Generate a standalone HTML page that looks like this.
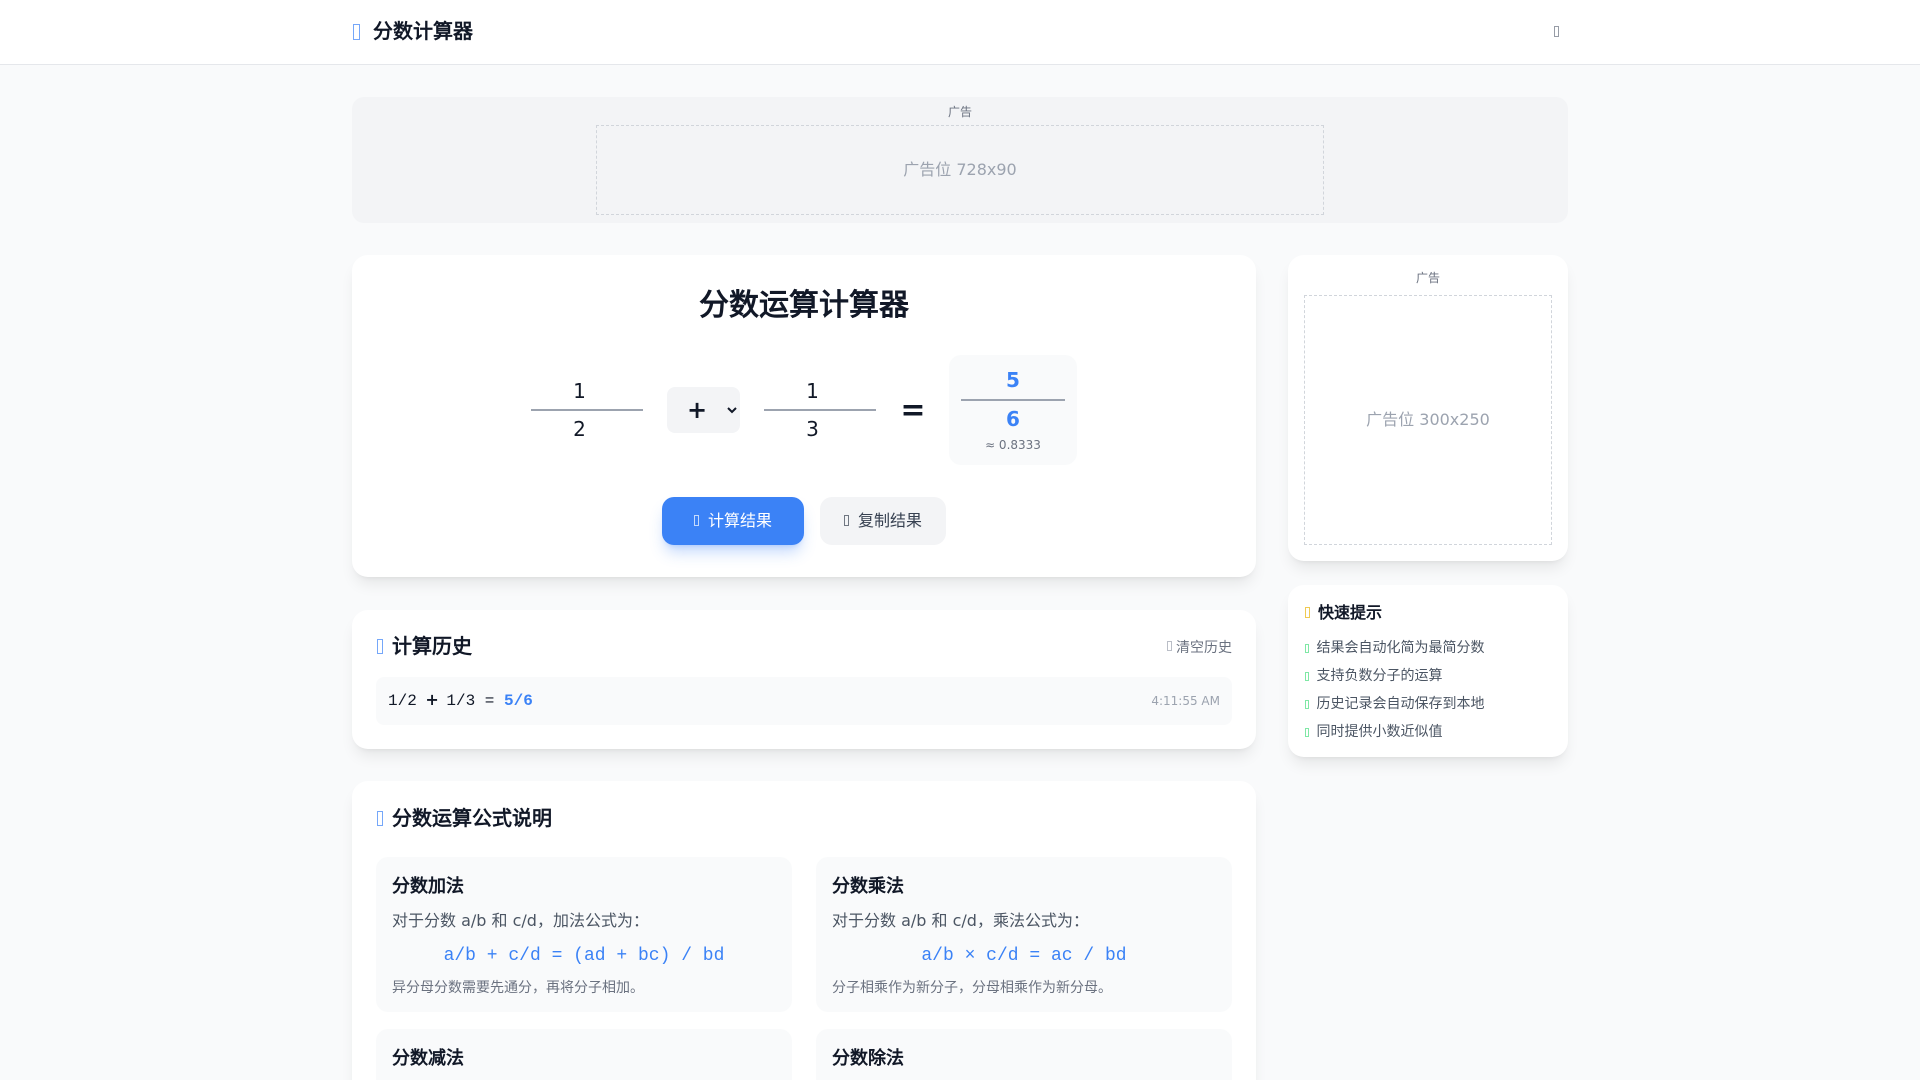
<!DOCTYPE html>
<html lang="zh-CN"><head><meta charset="utf-8"><title>分数计算器</title>
<style>
*{box-sizing:border-box;margin:0;padding:0}
html,body{width:1920px;height:1080px;overflow:hidden}
body{background:#f9fafb;color:#111827;font-family:"DejaVu Sans",sans-serif;font-size:16px;line-height:24px;position:relative}
.abs{position:absolute}
.tf{position:absolute;border:1px solid currentColor;opacity:.7}
.card{position:absolute;background:#fff;border-radius:16px;box-shadow:0 10px 15px -3px rgba(0,0,0,.08),0 4px 6px -4px rgba(0,0,0,.08)}
.hd{position:absolute;left:0;top:0;width:1920px;height:65px;background:#fff;border-bottom:1px solid #e5e7eb}
.ad-l{position:absolute;font-size:12px;line-height:16px;color:#6b7280;text-align:center}
.ad-b{position:absolute;border:1px dashed #d1d5db;display:flex;align-items:center;justify-content:center;color:#9ca3af;font-size:16px}
input{position:absolute;width:112px;height:38px;border:0;background:transparent;font:20px/28px "DejaVu Sans",sans-serif;color:#111827;text-align:center;outline:0}
.ln{position:absolute;height:2px;background:#9ca3af}
select{position:absolute;left:667px;top:387px;width:73px;height:46px;border:0;border-radius:8px;background:#f3f4f6;font:bold 24px "DejaVu Sans",sans-serif;color:#111827;padding-left:16px;outline:0}
.btn{position:absolute;top:497px;height:48px;border-radius:12px}
.btn span{position:absolute;top:12px;white-space:nowrap}
h3{position:absolute;font-size:20px;line-height:28px;font-weight:700;color:#111827}
.f{position:absolute;width:416px;height:155px;background:#f9fafb;border-radius:12px}
.f h4{position:absolute;left:16px;top:16px;font-size:18px;line-height:28px;font-weight:700}
.f p{position:absolute;left:16px;top:52px;color:#4b5563;font-size:16px;line-height:24px;white-space:nowrap}
.f code{position:absolute;left:0;width:416px;top:85px;text-align:center;font:18px/28px "Liberation Mono",monospace;color:#3b82f6}
.f small{position:absolute;left:16px;top:121px;font-size:14px;line-height:20px;color:#6b7280;white-space:nowrap}
.tip{position:absolute;left:1316.5px;font-size:14px;line-height:20px;color:#4b5563;white-space:nowrap}
.g{color:#4ade80}
</style></head><body>
<div class="hd"></div>
<div class="tf" style="left:353px;top:24px;width:7px;height:16px;color:#3b82f6"></div>
<div class="abs" style="left:373px;top:17px;font-size:20px;line-height:28px;font-weight:700">分数计算器</div>
<div class="tf" style="left:1554px;top:26px;width:5px;height:11px;color:#6b7280"></div>

<div class="abs" style="left:352px;top:97px;width:1216px;height:126px;background:#f3f4f6;border-radius:12px"></div>
<div class="ad-l" style="left:352px;width:1216px;top:104px">广告</div>
<div class="ad-b" style="left:596px;top:125px;width:728px;height:90px">广告位 728x90</div>

<div class="card" style="left:352px;top:255px;width:904px;height:322px"></div>
<div class="abs" style="left:352px;width:904px;top:286px;text-align:center;font-size:30px;line-height:40px;font-weight:700">分数运算计算器</div>
<input type="number" value="1" style="left:531px;top:372px">
<div class="ln" style="left:531px;top:409px;width:112px"></div>
<input type="number" value="2" style="left:531px;top:410px">
<select><option>+</option></select>
<input type="number" value="1" style="left:764px;top:372px">
<div class="ln" style="left:764px;top:409px;width:112px"></div>
<input type="number" value="3" style="left:764px;top:410px">
<div class="abs" style="left:893px;width:40px;top:391px;text-align:center;font-size:30px;line-height:40px;font-weight:700">=</div>
<div class="abs" style="left:949px;top:355px;width:128px;height:110px;background:#f9fafb;border-radius:12px"></div>
<div class="abs" style="left:949px;width:128px;top:366px;text-align:center;font-size:20px;line-height:28px;font-weight:700;color:#3b82f6">5</div>
<div class="ln" style="left:961px;top:399px;width:104px"></div>
<div class="abs" style="left:949px;width:128px;top:405px;text-align:center;font-size:20px;line-height:28px;font-weight:700;color:#3b82f6">6</div>
<div class="abs" style="left:949px;width:128px;top:437px;text-align:center;font-size:12px;line-height:16px;color:#6b7280">≈ 0.8333</div>
<div class="btn" style="left:662px;width:142px;background:#3b82f6;color:#fff;box-shadow:0 10px 15px -3px rgba(59,130,246,.3),0 4px 6px -4px rgba(59,130,246,.3)"><div class="tf" style="left:32px;top:18px;width:5px;height:11px"></div><span style="left:46px">计算结果</span></div>
<div class="btn" style="left:820px;width:126px;background:#f3f4f6;color:#374151"><div class="tf" style="left:24px;top:18px;width:5px;height:11px"></div><span style="left:38px">复制结果</span></div>

<div class="card" style="left:352px;top:610px;width:904px;height:139px"></div>
<div class="tf" style="left:377px;top:639px;width:6px;height:15px;color:#3b82f6"></div>
<h3 style="left:392px;top:632px">计算历史</h3>
<div class="tf" style="left:1167px;top:641px;width:5px;height:10px;color:#9ca3af"></div>
<div class="abs" style="right:688px;top:638px;font-size:14px;line-height:20px;color:#6b7280">清空历史</div>
<div class="abs" style="left:376px;top:677px;width:856px;height:48px;background:#f9fafb;border-radius:8px"></div>
<div class="abs" style="left:388px;top:689px;font:16px/24px 'Liberation Mono',monospace;white-space:pre">1/2 <b style="display:inline-block;width:10.4px;height:16px;line-height:16px;font-family:'DejaVu Sans',sans-serif;text-indent:-1px">+</b> 1/3 = <b style="color:#3b82f6">5/6</b></div>
<div class="abs" style="left:1120px;width:100px;text-align:right;top:693px;font-size:12px;line-height:16px;color:#9ca3af;white-space:nowrap">4:11:55 AM</div>

<div class="card" style="left:352px;top:781px;width:904px;height:400px"></div>
<div class="tf" style="left:377px;top:811px;width:6px;height:15px;color:#3b82f6"></div>
<h3 style="left:392px;top:804px">分数运算公式说明</h3>
<div class="f" style="left:376px;top:857px"><h4>分数加法</h4><p>对于分数 a/b 和 c/d，加法公式为：</p><code>a/b + c/d = (ad + bc) / bd</code><small>异分母分数需要先通分，再将分子相加。</small></div>
<div class="f" style="left:816px;top:857px"><h4>分数乘法</h4><p>对于分数 a/b 和 c/d，乘法公式为：</p><code>a/b × c/d = ac / bd</code><small>分子相乘作为新分子，分母相乘作为新分母。</small></div>
<div class="f" style="left:376px;top:1029px"><h4>分数减法</h4></div>
<div class="f" style="left:816px;top:1029px"><h4>分数除法</h4></div>

<div class="card" style="left:1288px;top:255px;width:280px;height:306px"></div>
<div class="ad-l" style="left:1288px;width:280px;top:270px">广告</div>
<div class="ad-b" style="left:1304px;top:295px;width:248px;height:250px">广告位 300x250</div>

<div class="card" style="left:1288px;top:585px;width:280px;height:172px"></div>
<div class="tf" style="left:1305px;top:607px;width:5px;height:11px;color:#eab308"></div>
<div class="abs" style="left:1318px;top:601px;font-weight:700;line-height:24px">快速提示</div>
<div class="tf g" style="left:1305px;top:644px;width:4px;height:9px"></div><div class="tip" style="top:638px">结果会自动化简为最简分数</div>
<div class="tf g" style="left:1305px;top:672px;width:4px;height:9px"></div><div class="tip" style="top:666px">支持负数分子的运算</div>
<div class="tf g" style="left:1305px;top:700px;width:4px;height:9px"></div><div class="tip" style="top:694px">历史记录会自动保存到本地</div>
<div class="tf g" style="left:1305px;top:728px;width:4px;height:9px"></div><div class="tip" style="top:722px">同时提供小数近似值</div>
</body></html>
